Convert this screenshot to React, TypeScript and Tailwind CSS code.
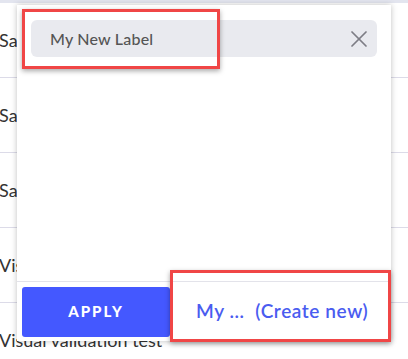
import { X } from "lucide-react";

const rows = ["Sample label one", "Sample label two", "Sample label three", "Visual validation test", "Visual validation test"];

const App = () => {
  return (
    <div className="relative w-[408px] h-[359px] overflow-hidden bg-[#f4f4f6] font-['Lato',sans-serif]">
      {/* Background table */}
      <div className="h-[3px] bg-[#e3e5ef]" />
      <div className="flex flex-col">
        {rows.map((r, i) => (
          <div
            key={i}
            className="h-[75px] flex items-center border-b border-[#dcdbe8] bg-white -ml-[1px] text-[18px] text-[#333] whitespace-nowrap"
          >
            {r}
          </div>
        ))}
      </div>

      {/* Popup */}
      <div className="absolute left-[17px] top-[5px] w-[374px] h-[336px] bg-white flex flex-col shadow-[0_0_6px_rgba(0,0,0,0.25)]">
        <div className="px-[14px] pt-[15px] flex-1">
          <div className="h-[37px] rounded-md bg-[#e9eaef] flex items-center justify-between pl-[19px] pr-[4px]">
            <span className="text-[16px] font-medium text-[#555] tracking-[0.2px]">My New Label</span>
            <X className="w-[28px] h-[28px] text-[#7d7d85]" strokeWidth={1.5} />
          </div>
        </div>
        <div className="border-t border-[#e3e3ea] h-[60px] flex items-center pl-[5px] gap-[26px]">
          <button className="w-[148px] h-[50px] rounded-[3px] bg-[#4458ff] text-white text-[15px] font-black tracking-[2px]">
            APPLY
          </button>
          <span className="text-[19px] font-semibold text-[#4a5cf0] tracking-[0.6px] whitespace-nowrap">
            My …&nbsp; (Create new)
          </span>
        </div>
      </div>

      {/* Highlight boxes */}
      <div className="absolute left-[22px] top-[9px] w-[198px] h-[60px] border-[3px] border-[#f04646] shadow-[0_2px_5px_rgba(0,0,0,0.35)]" />
      <div className="absolute left-[170px] top-[270px] w-[221px] h-[72px] border-[3px] border-[#f04646] shadow-[0_2px_5px_rgba(0,0,0,0.35)]" />
    </div>
  );
};

export default App;
